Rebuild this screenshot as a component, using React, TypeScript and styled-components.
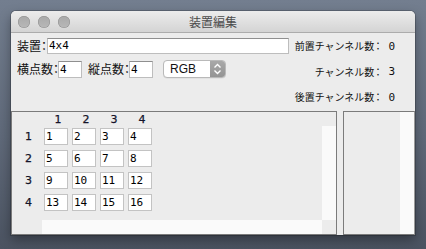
import React from "react";
import styled, { createGlobalStyle } from "styled-components";

const Global = createGlobalStyle`
  html, body { margin: 0; padding: 0; }
  body {
    width: 426px; height: 249px; overflow: hidden;
    background: linear-gradient(to bottom, #737e8f 0%, #5f6979 55%, #4b5361 100%);
  }
  * { box-sizing: border-box; }
`;

const Desktop = styled.div`
  width: 426px;
  height: 249px;
  padding: 11px;
`;

const Window = styled.div`
  width: 404px;
  height: 224px;
  display: flex;
  flex-direction: column;
  background: #ececec;
  border-radius: 5px 5px 0 0;
  overflow: hidden;
  box-shadow: 0 0 0 1px rgba(0, 0, 0, 0.18), 0 5px 12px rgba(0, 0, 0, 0.35);
`;

const TitleBar = styled.div`
  position: relative;
  height: 22px;
  flex: none;
  display: flex;
  align-items: center;
  padding-left: 7px;
  gap: 8px;
  background: linear-gradient(to bottom, #ececec, #d4d4d4);
  border-bottom: 1px solid #acacac;
`;

const Light = styled.span`
  width: 12px;
  height: 12px;
  border-radius: 50%;
  background: linear-gradient(to bottom, #a9a9a9, #b8b8b8);
  box-shadow: inset 0 0 0 0.5px #8e8e8e;
  margin-top: 1px;
`;

const Title = styled.div`
  position: absolute;
  left: 0;
  right: 0;
  top: 0;
  bottom: 0;
  display: flex;
  align-items: center;
  justify-content: center;
  font-family: "Noto Sans CJK JP", sans-serif;
  font-size: 12px;
  color: #4b4b4b;
  pointer-events: none;
`;

const TopArea = styled.div`
  height: 78px;
  flex: none;
  display: flex;
  padding: 5px 20px 0 6px;
  gap: 4px;
`;

const FormCol = styled.div`
  width: 272px;
  display: flex;
  flex-direction: column;
  gap: 6px;
`;

const FormRow = styled.div`
  display: flex;
  align-items: center;
`;

const Label = styled.span<{ $w?: number; $size?: number }>`
  font-family: "Noto Sans CJK JP", sans-serif;
  font-size: ${(p) => p.$size ?? 12}px;
  color: #111;
  white-space: nowrap;
  ${(p) => (p.$w ? `width: ${p.$w}px; flex: none;` : "")}
  line-height: 16px;
`;

const Colon = styled.span<{ $pad: number }>`
  font-feature-settings: "halt";
  padding-left: ${(p) => p.$pad}px;
`;

const TextField = styled.div<{ $w?: number; $h: number }>`
  ${(p) => (p.$w ? `width: ${p.$w}px; flex: none;` : "flex: 1;")}
  height: ${(p) => p.$h}px;
  background: #fff;
  border: 1px solid #bdbdbd;
  border-top-color: #8f8f8f;
  font-family: "DejaVu Sans Mono", monospace;
  font-size: 11px;
  line-height: ${(p) => p.$h - 2}px;
  padding-left: 1px;
  color: #000;
`;

const Spacer = styled.span<{ $w: number }>`
  width: ${(p) => p.$w}px;
  flex: none;
`;

const Select = styled.div`
  width: 63px;
  height: 18px;
  flex: none;
  display: flex;
  border-radius: 4px;
  border: 1px solid #b9b9b9;
  background: #fff;
  overflow: hidden;
  box-shadow: 0 0.5px 0 rgba(0, 0, 0, 0.08);
`;

const SelectText = styled.span`
  flex: 1;
  font-family: "Liberation Sans", Arial, sans-serif;
  font-size: 12px;
  line-height: 16px;
  padding-left: 6px;
  color: #111;
`;

const SelectArrow = styled.span`
  width: 15px;
  flex: none;
  display: flex;
  align-items: center;
  justify-content: center;
  background: linear-gradient(to bottom, #a8a8a8, #949494);
`;

const InfoCol = styled.div`
  flex: 1;
  display: flex;
  flex-direction: column;
  align-items: flex-end;
  gap: 9.5px;
`;

const InfoRow = styled.div`
  display: flex;
  align-items: center;
  height: 16px;
`;

const Num = styled.span`
  font-family: "DejaVu Sans Mono", monospace;
  font-size: 11px;
  color: #111;
  margin-left: 8px;
`;

const BottomArea = styled.div`
  flex: 1;
  display: flex;
  gap: 6px;
`;

const TablePane = styled.div`
  width: 326px;
  height: 124px;
  border: 1px solid #7b7b7b;
  display: grid;
  grid-template-columns: 30px 280px 14px;
  grid-template-rows: 14px 94px 14px;
`;

const ColHeader = styled.div`
  grid-column: 2;
  grid-row: 1;
  display: flex;
  gap: 4px;
  padding-left: 4px;
`;

const HeadLabel = styled.span`
  width: 24px;
  display: flex;
  align-items: center;
  justify-content: center;
  font-family: "DejaVu Sans", sans-serif;
  font-size: 11px;
  color: #14142a;
  -webkit-text-stroke: 0.25px #14142a;
`;

const RowHeader = styled.div`
  grid-column: 1;
  grid-row: 2;
  display: flex;
  flex-direction: column;
  gap: 5px;
  padding-top: 2px;
  padding-left: 3px;
`;

const RowLabel = styled(HeadLabel)`
  width: auto;
  height: 17px;
`;

const Viewport = styled.div`
  grid-column: 2;
  grid-row: 2;
  display: grid;
  grid-template-columns: repeat(4, 24px);
  grid-auto-rows: 17px;
  column-gap: 4px;
  row-gap: 5px;
  padding: 2px 0 0 2px;
  align-content: start;
`;

const Cell = styled.div`
  background: #fff;
  border: 1px solid #c3c3c3;
  font-family: "DejaVu Sans Mono", monospace;
  font-size: 11px;
  line-height: 15px;
  padding-left: 1px;
  color: #000;
`;

const Track = styled.div<{ $col: number; $row: number }>`
  grid-column: ${(p) => p.$col};
  grid-row: ${(p) => p.$row};
  background: #fafafa;
`;

const SidePane = styled.div`
  flex: 1;
  height: 124px;
  border: 1px solid #7b7b7b;
  border-right-color: #9a9a9a;
  display: grid;
  grid-template-columns: 1fr 14px;
`;

const Arrows = () => (
  <svg width="9" height="14" viewBox="0 0 9 14">
    <path d="M1.5 5.5 L4.5 2.5 L7.5 5.5" fill="none" stroke="#fff" strokeWidth="1.4" />
    <path d="M1.5 8.5 L4.5 11.5 L7.5 8.5" fill="none" stroke="#fff" strokeWidth="1.4" />
  </svg>
);

export default function App() {
  const rows = [1, 2, 3, 4];
  return (
    <>
      <Global />
      <Desktop>
        <Window>
          <TitleBar>
            <Light />
            <Light />
            <Light />
            <Title>装置編集</Title>
          </TitleBar>
          <TopArea>
            <FormCol>
              <FormRow>
                <Label $w={30}>
                  装置<Colon $pad={0}>：</Colon>
                </Label>
                <TextField $h={16}>4x4</TextField>
              </FormRow>
              <FormRow>
                <Label $w={41}>
                  横点数<Colon $pad={0}>：</Colon>
                </Label>
                <TextField $w={24} $h={17}>4</TextField>
                <Spacer $w={6} />
                <Label $w={41}>
                  縦点数<Colon $pad={0}>：</Colon>
                </Label>
                <TextField $w={24} $h={17}>4</TextField>
                <Spacer $w={10} />
                <Select>
                  <SelectText>RGB</SelectText>
                  <SelectArrow>
                    <Arrows />
                  </SelectArrow>
                </Select>
              </FormRow>
            </FormCol>
            <InfoCol>
              <InfoRow>
                <Label $size={10}>
                  前置チャンネル数<Colon $pad={1}>：</Colon>
                </Label>
                <Num>0</Num>
              </InfoRow>
              <InfoRow>
                <Label $size={10}>
                  チャンネル数<Colon $pad={1}>：</Colon>
                </Label>
                <Num>3</Num>
              </InfoRow>
              <InfoRow>
                <Label $size={10}>
                  後置チャンネル数<Colon $pad={1}>：</Colon>
                </Label>
                <Num>0</Num>
              </InfoRow>
            </InfoCol>
          </TopArea>
          <BottomArea>
            <TablePane>
              <ColHeader>
                {rows.map((c) => (
                  <HeadLabel key={c}>{c}</HeadLabel>
                ))}
              </ColHeader>
              <RowHeader>
                {rows.map((r) => (
                  <RowLabel key={r}>{r}</RowLabel>
                ))}
              </RowHeader>
              <Viewport>
                {Array.from({ length: 16 }, (_, i) => (
                  <Cell key={i}>{i + 1}</Cell>
                ))}
              </Viewport>
              <Track $col={3} $row={2} />
              <Track $col={2} $row={3} />
            </TablePane>
            <SidePane>
              <div />
              <Track $col={2} $row={1} />
            </SidePane>
          </BottomArea>
        </Window>
      </Desktop>
    </>
  );
}
